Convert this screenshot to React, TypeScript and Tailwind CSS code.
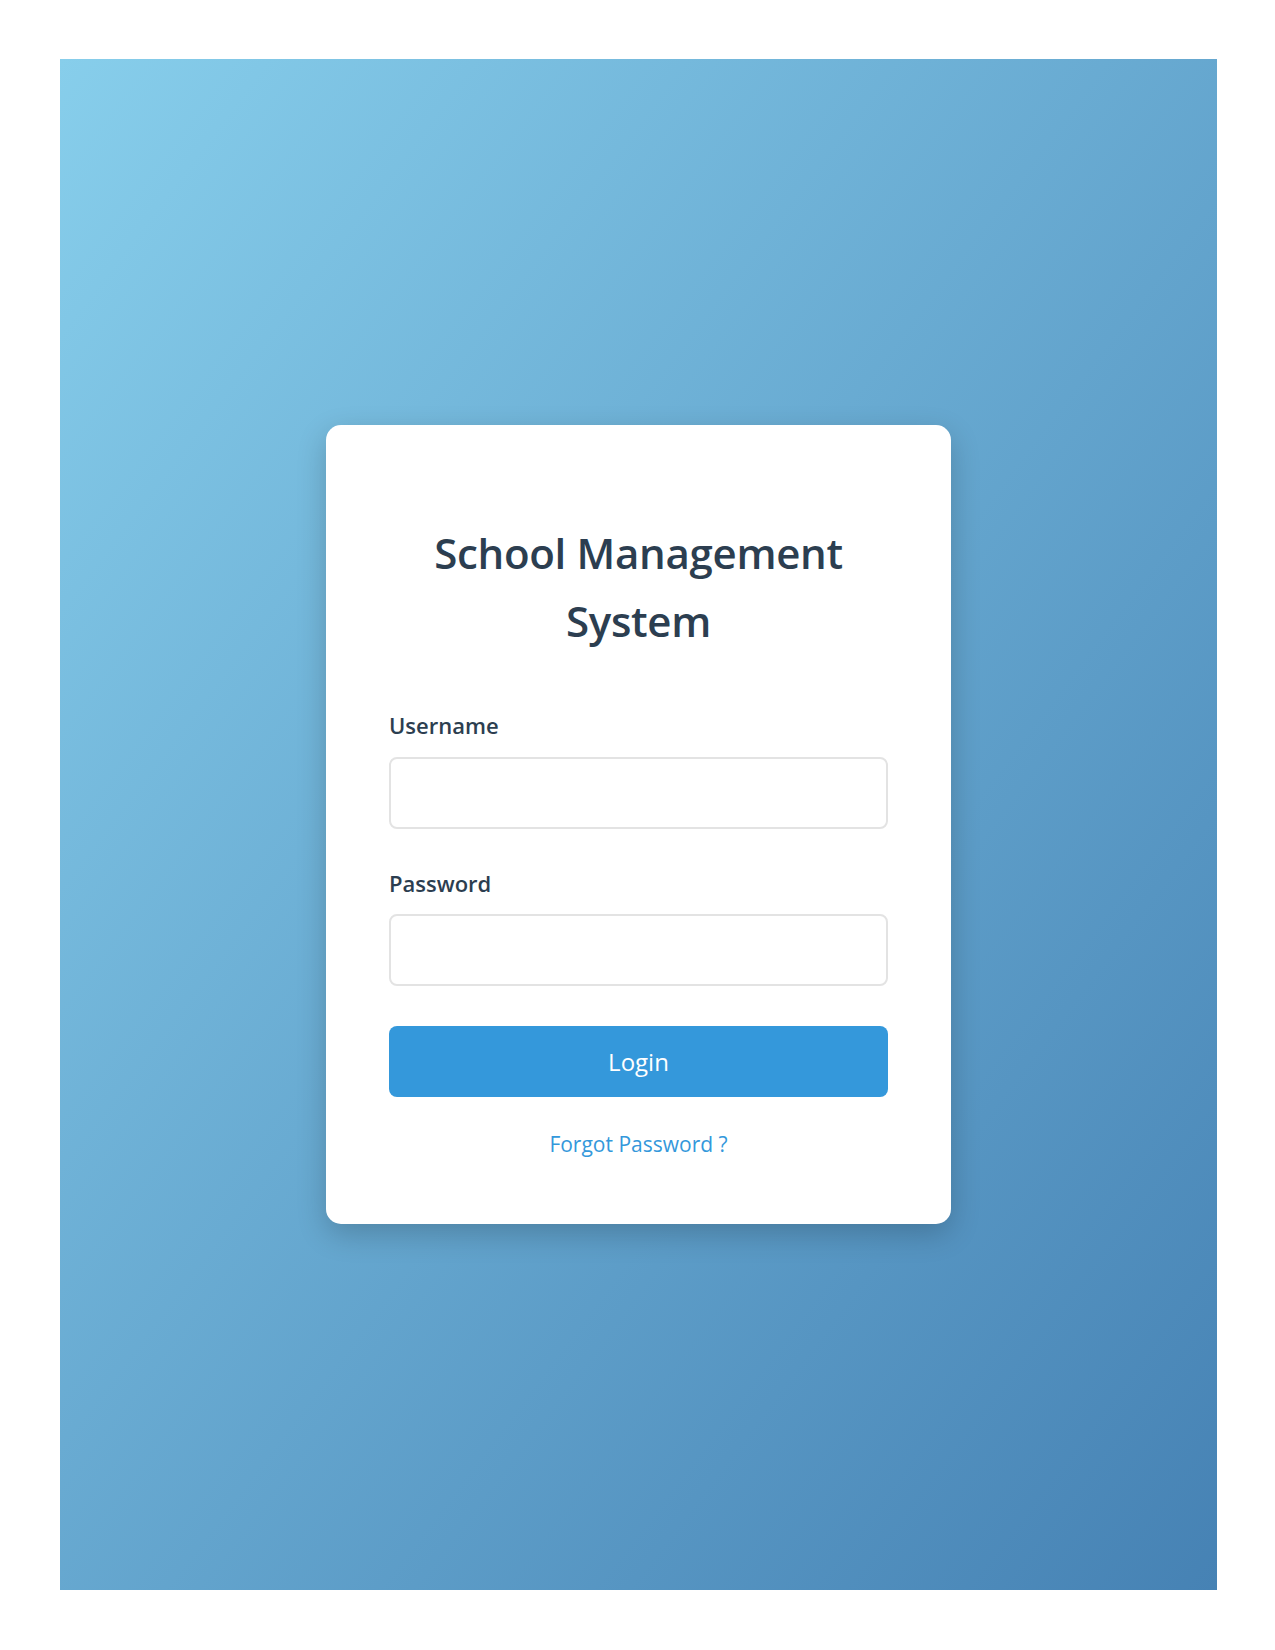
import React from "react";

export default function App() {
  const font = { fontFamily: '"Open Sans", "Noto Sans", sans-serif' };
  return (
    <div className="bg-white py-[59px] pl-[60px] pr-[58px]" style={font}>
      <div className="h-[1531px] w-full bg-gradient-to-br from-[#87ceeb] to-[#4682b4] flex items-center justify-center">
        <div className="w-[625px] bg-white rounded-[15px] shadow-[0_10px_30px_rgba(0,0,0,0.2)] px-[63px] pt-[94px] pb-[63px]">
          <h1 className="text-center text-[42px] leading-[68px] font-semibold text-[#2c3e50] tracking-[-0.3px]">
            School Management System
          </h1>
          <div className="mt-[55px]">
            <label className="block text-[22px] leading-[30px] font-semibold text-[#2c3e50]">Username</label>
            <input
              type="text"
              className="mt-[17px] block w-full h-[72px] rounded-[8px] border-2 border-[#e3e3e3] bg-white px-4 outline-none"
            />
          </div>
          <div className="mt-[39px]">
            <label className="block text-[22px] leading-[30px] font-semibold text-[#2c3e50]">Password</label>
            <input
              type="password"
              className="mt-[16px] block w-full h-[72px] rounded-[8px] border-2 border-[#e3e3e3] bg-white px-4 outline-none"
            />
          </div>
          <button className="mt-[40px] w-full h-[71px] rounded-[8px] bg-[#3498db] text-white text-[24px] leading-none">
            Login
          </button>
          <div className="mt-[31px] text-center">
            <a href="#" className="text-[21px] leading-[33px] text-[#3498db]">
              Forgot Password ?
            </a>
          </div>
        </div>
      </div>
    </div>
  );
}
